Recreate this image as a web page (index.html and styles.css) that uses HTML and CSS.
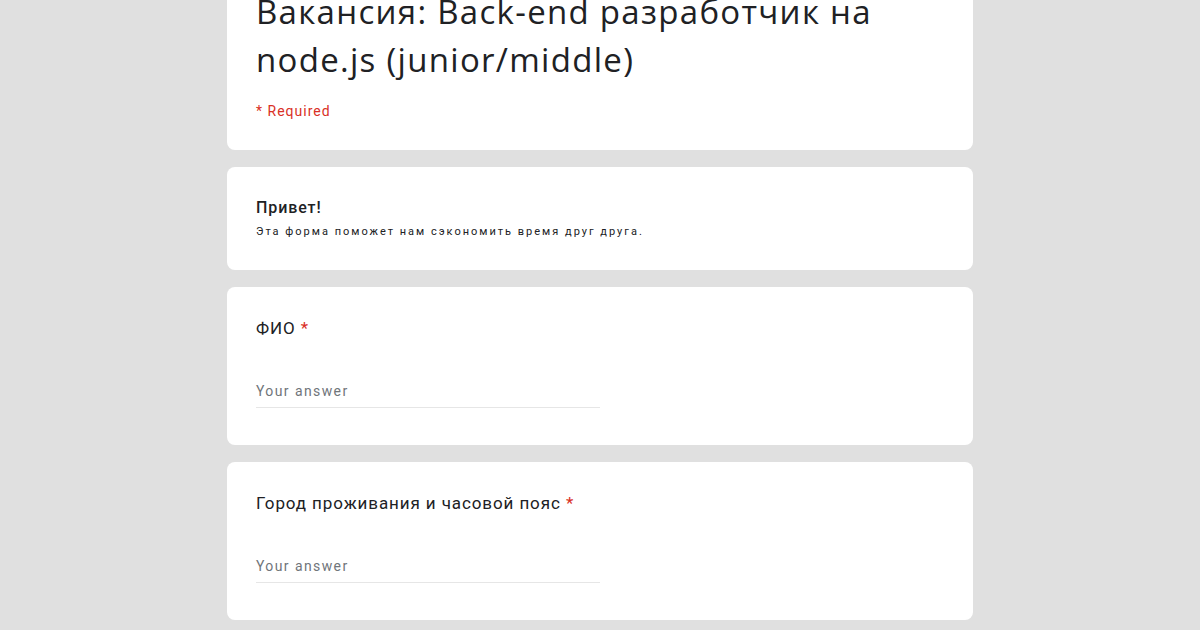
FILE: index.html
```html
<!DOCTYPE html>
<html lang="ru">
<head>
<meta charset="utf-8">
<link rel="stylesheet" href="styles.css">
</head>
<body>
<main class="form">
  <section class="card header">
    <h1 class="title">Вакансия: Back-end разработчик на node.js (junior/middle)</h1>
    <div class="required">* Required</div>
  </section>
  <section class="card intro">
    <div class="intro-title">Привет!</div>
    <div class="intro-desc">Эта форма поможет нам сэкономить время друг друга.</div>
  </section>
  <section class="card question">
    <div class="label">ФИО <span class="star">*</span></div>
    <div class="answer">Your answer</div>
  </section>
  <section class="card question">
    <div class="label">Город проживания и часовой пояс <span class="star">*</span></div>
    <div class="answer">Your answer</div>
  </section>
</main>
</body>
</html>
```
FILE: styles.css
```css
html, body {
  margin: 0;
  padding: 0;
  background: #e0e0e0;
  height: 100%;
  overflow: hidden;
}
body {
  font-family: Roboto, "Noto Sans", sans-serif;
  color: #202124;
}
.form {
  width: 746px;
  margin: -34px auto 0;
  display: flex;
  flex-direction: column;
  gap: 17px;
}
.card {
  background: #fff;
  border-radius: 8px;
  padding: 0 29px;
}
.header {
  padding-top: 22px;
  padding-bottom: 29px;
}
.title {
  margin: 0;
  font-family: "Open Sans", Roboto, sans-serif;
  font-weight: 400;
  font-size: 33px;
  line-height: 48px;
  letter-spacing: 1.3px;
  width: 660px;
}
.required {
  margin-top: 17px;
  color: #d93025;
  font-size: 14px;
  line-height: 20px;
  letter-spacing: 1px;
}
.intro {
  padding-top: 29px;
  padding-bottom: 30px;
}
.intro-title {
  font-size: 16px;
  font-weight: 500;
  line-height: 24px;
  letter-spacing: 0.9px;
}
.intro-desc {
  margin-top: 4px;
  font-size: 11px;
  line-height: 16px;
  letter-spacing: 2px;
}
.question {
  padding-top: 29px;
  padding-bottom: 37px;
}
.label {
  font-size: 17px;
  line-height: 24px;
  letter-spacing: 0.9px;
}
.star {
  color: #d93025;
}
.answer {
  margin-top: 41px;
  width: 344px;
  font-size: 14px;
  line-height: 20px;
  color: #70757a;
  letter-spacing: 1.4px;
  padding-bottom: 6px;
  border-bottom: 1px solid #e6e6e6;
}
```
